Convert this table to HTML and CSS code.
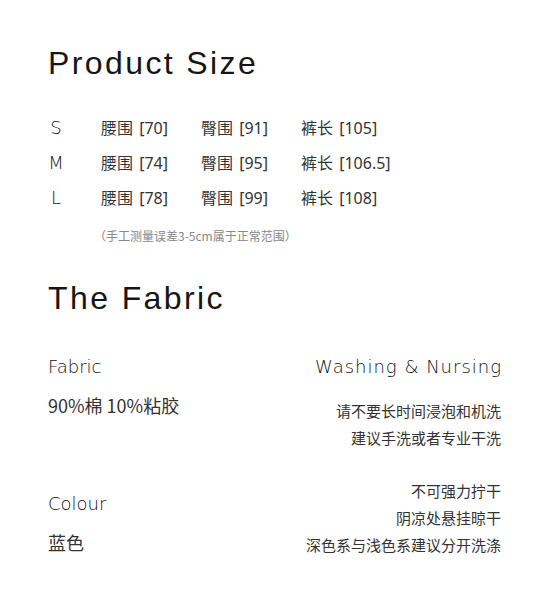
FILE: index.html
```html
<!DOCTYPE html>
<html lang="zh">
<head>
<meta charset="utf-8">
<link rel="stylesheet" href="styles.css">
</head>
<body>
<section class="size">
  <h1 class="title">Product Size</h1>
  <div class="size-table">
    <div class="sz">S</div><div class="cell">腰围 [70]</div><div class="cell">臀围 [91]</div><div class="cell">裤长 [105]</div>
    <div class="sz">M</div><div class="cell">腰围 [74]</div><div class="cell">臀围 [95]</div><div class="cell">裤长 [106.5]</div>
    <div class="sz">L</div><div class="cell">腰围 [78]</div><div class="cell">臀围 [99]</div><div class="cell">裤长 [108]</div>
  </div>
  <p class="note">（手工测量误差3-5cm属于正常范围）</p>
</section>
<section class="fabric">
  <h1 class="title title-fabric">The Fabric</h1>
  <div class="cols">
    <div class="col-left">
      <div class="label">Fabric</div>
      <div class="value">90%棉 10%粘胶</div>
      <div class="label label-colour">Colour</div>
      <div class="value">蓝色</div>
    </div>
    <div class="col-right">
      <div class="label label-wash">Washing &amp; Nursing</div>
      <div class="care care-first">请不要长时间浸泡和机洗</div>
      <div class="care">建议手洗或者专业干洗</div>
      <div class="care care-gap">不可强力拧干</div>
      <div class="care">阴凉处悬挂晾干</div>
      <div class="care">深色系与浅色系建议分开洗涤</div>
    </div>
  </div>
</section>
</body>
</html>
```

FILE: styles.css
```css
html, body {
  margin: 0;
  padding: 0;
  background: #ffffff;
}
body {
  width: 533px;
  height: 607px;
  overflow: hidden;
  font-family: "Noto Sans CJK SC", "Noto Sans", sans-serif;
  color: #333;
}
.size {
  padding: 47px 0 0 48px;
}
.title {
  margin: 0;
  font-family: "Liberation Sans", Arial, sans-serif;
  font-weight: normal;
  font-size: 32px;
  line-height: 32px;
  letter-spacing: 2.4px;
  color: #151515;
}
.size-table {
  margin-top: 31px;
  display: grid;
  grid-template-columns: 53px 100px 100px auto;
  grid-auto-rows: 35px;
  align-items: center;
}
.sz {
  width: 16px;
  text-align: center;
  font-family: "DejaVu Sans", sans-serif;
  font-weight: 200;
  font-size: 18px;
  color: #111;
}
.cell {
  font-family: "Noto Sans", "Noto Sans CJK SC", sans-serif;
  font-size: 16px;
  line-height: 20px;
  word-spacing: 2px;
  color: #333;
}
.note {
  margin: 13px 0 0 46px;
  font-size: 12px;
  line-height: 16px;
  color: #888;
}
.fabric {
  padding: 38px 32px 0 48px;
}
.cols {
  display: flex;
  justify-content: space-between;
  margin-top: 41px;
}
.col-left, .col-right {
  display: flex;
  flex-direction: column;
}
.col-right {
  align-items: flex-end;
}
.label {
  font-family: "DejaVu Sans", sans-serif;
  font-weight: 200;
  font-size: 18px;
  line-height: 24px;
  color: #111;
}
.label-wash {
  letter-spacing: 1px;
  margin-right: -1px;
}
.value {
  margin-top: 14px;
  font-size: 18px;
  line-height: 24px;
  color: #333;
}
.label-colour {
  margin-top: 75px;
}
.care {
  font-size: 15px;
  line-height: 27px;
  color: #333;
}
.care-first {
  margin-top: 18px;
}
.care-gap {
  margin-top: 26px;
}
```
